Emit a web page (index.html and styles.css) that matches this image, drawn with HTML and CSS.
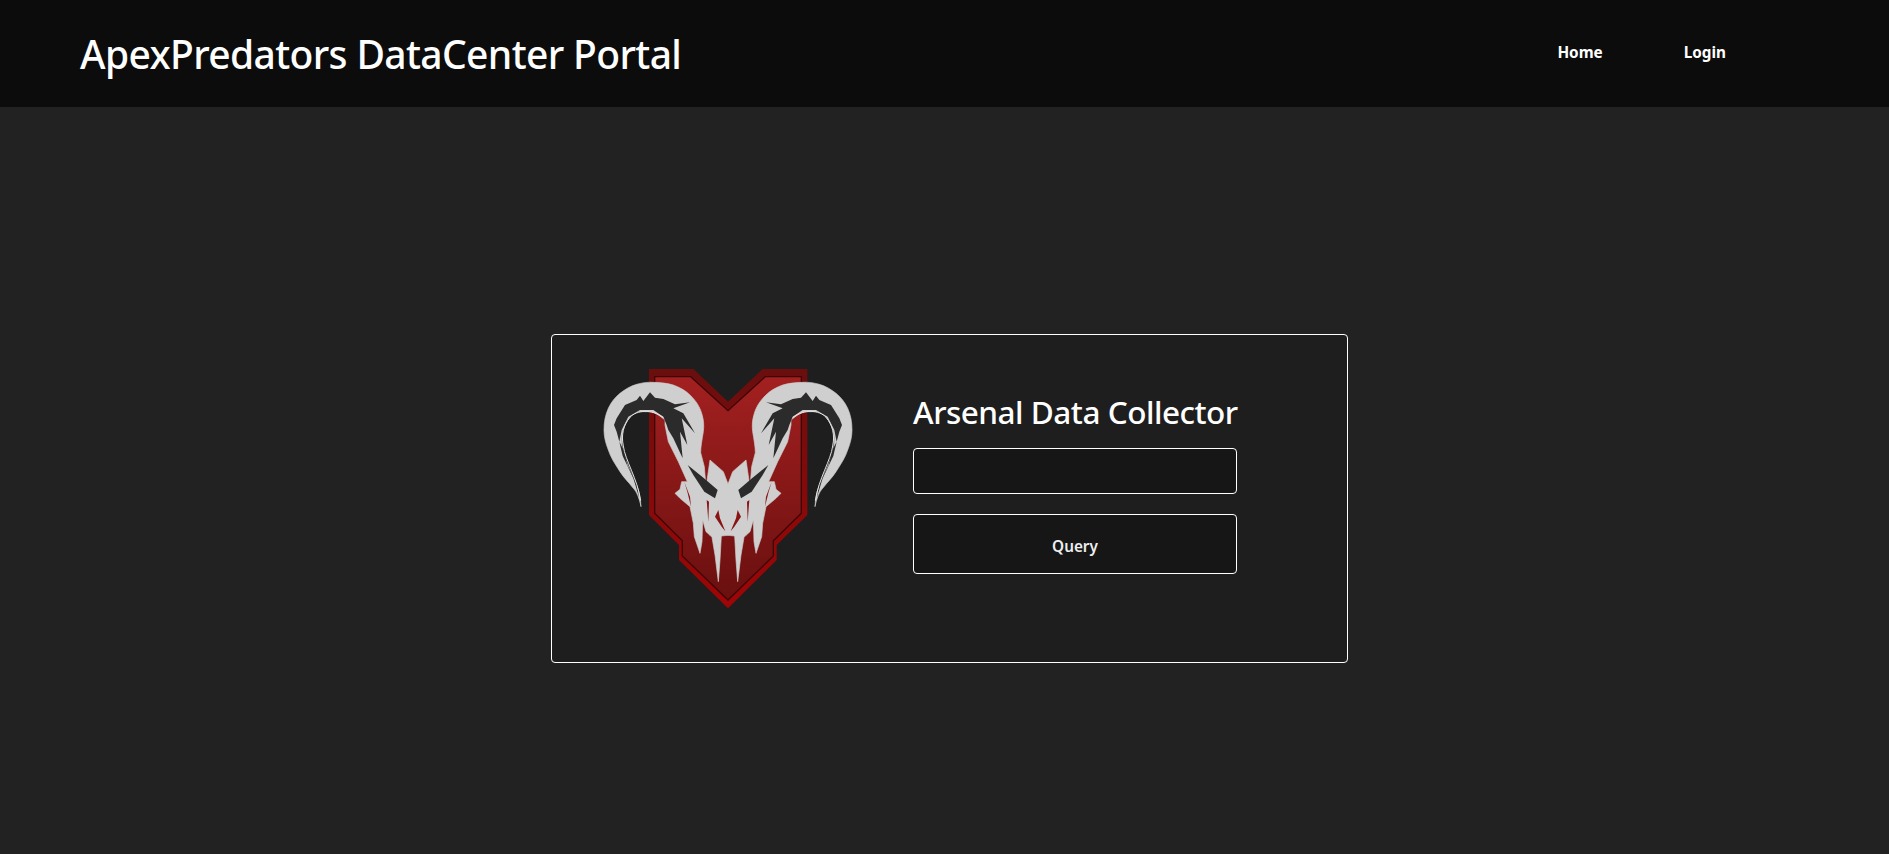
FILE: index.html
```html
<!DOCTYPE html>
<html lang="en">
<head>
<meta charset="utf-8">
<title>ApexPredators DataCenter Portal</title>
<link rel="stylesheet" href="styles.css">
</head>
<body>
<header class="topbar">
  <h1 class="brand">ApexPredators DataCenter Portal</h1>
  <nav class="nav">
    <a class="nav-link" href="#">Home</a>
    <a class="nav-link" href="#">Login</a>
  </nav>
</header>
<main class="page">
  <section class="card">
    <svg class="logo" viewBox="0 0 900 810" width="300" height="270" role="img" aria-label="Apex Predators logo">
      <defs>
        <linearGradient id="rim" x1="0" y1="0" x2="0" y2="1">
          <stop offset="0" stop-color="#6a0e0e"/>
          <stop offset="1" stop-color="#a00506"/>
        </linearGradient>
        <linearGradient id="fill" x1="0" y1="0" x2="0" y2="1">
          <stop offset="0" stop-color="#a32020"/>
          <stop offset="1" stop-color="#6a0f0f"/>
        </linearGradient>
        <g id="half">
          <path class="bone" d="M183 470 C178 445 170 425 160 415 C145 395 130 382 120 365 C104 340 92 322 85 300 C76 278 72 258 72 240 C72 215 76 195 85 175 C94 156 105 142 120 130 C135 118 152 108 170 103 C188 98 205 96 220 97 C245 98 262 100 280 105 C300 113 318 122 330 135 C348 152 360 172 365 190 C372 212 372 228 370 245 C366 270 362 290 362 308 L373 350 L378 412 L390 330 L430 365 L444 402 L444 556 L424 558 L420 630 L415 695 L405 615 L396 562 L390 556 L378 545 L368 510 L366 575 L360 610 L343 560 L340 520 L330 470 L300 445 L285 430 L300 418 L305 395 L322 395 L295 335 L265 275 L255 225 L255 210 C240 198 225 186 210 185 L175 185 C155 192 145 205 140 215 C130 232 125 250 125 265 C125 290 128 310 135 325 C145 350 158 380 170 405 C178 425 182 450 183 470 Z"/>
          <path class="dark" d="M110 245 L102 225 L110 205 L135 165 L170 150 L180 137 L190 153 L210 127 L225 143 L250 147 L285 163 L330 157 L280 175 L310 190 L345 250 L305 205 L322 285 L300 245 L308 325 L280 265 L265 240 L260 225 L250 200 L220 180 L180 180 L145 200 L125 240 L118 275 Z"/>
          <path class="dark" d="M118 275 L128 318 L160 385 L178 445 L170 400 L142 345 L131 300 Z"/>
          <path class="line" d="M130 288 C123 255 130 225 150 202 C170 180 215 176 250 203"/>
          <path class="line" d="M130 288 C135 330 172 385 182 452"/>
          <path class="dark" d="M323 345 L372 385 L413 420 L405 445 L373 425 L340 375 Z"/>
          <path class="slit" d="M415 480 L405 500 L425 530 L436 544 L420 505 Z"/>
          <path class="slit" d="M380 450 L385 515 L387 455 Z"/>
          <path class="slit" d="M313 395 L322 425 L333 470 L330 440 Z"/>
        </g>
      </defs>
      <path fill="url(#rim)" d="M207 57 L340 57 L444 155 L548 57 L682 57 L682 495 L590 585 L590 630 L444 775 L297 630 L297 585 L207 495 Z"/>
      <path fill="url(#fill)" stroke="#3c0707" stroke-width="4" d="M224 80 L332 80 L444 182 L556 80 L664 80 L664 490 L580 572 L580 618 L444 750 L307 618 L307 572 L224 490 Z"/>
      <use href="#half"/>
      <use href="#half" transform="translate(888 0) scale(-1 1)"/>
    </svg>
    <form class="panel">
      <h2 class="panel-title">Arsenal Data Collector</h2>
      <input class="field" type="text" aria-label="Query text">
      <button class="action" type="button">Query</button>
    </form>
  </section>
</main>
</body>
</html>
```
FILE: styles.css
```css
* { box-sizing: border-box; }
html, body { height: 100%; }
body {
  margin: 0;
  background: #222222;
  color: #fff;
  font-family: "Noto Sans", "Open Sans", sans-serif;
  overflow: hidden;
}
.topbar {
  height: 107px;
  background: #0c0c0c;
  display: flex;
  align-items: center;
  padding: 0 0 0 80px;
}
.brand {
  margin: 0;
  font-size: 39px;
  font-weight: 500;
  letter-spacing: -0.63px;
  line-height: 52px;
}
.nav {
  margin-left: auto;
  margin-right: 163px;
  display: flex;
  gap: 81px;
  position: relative;
  top: -2px;
}
.nav-link {
  color: #fff;
  font-size: 15.3px;
  font-weight: 700;
  text-decoration: none;
}
.page {
  display: flex;
  justify-content: center;
  padding: 227px 0 0 10px;
}
.card {
  width: 797px;
  height: 329px;
  background: #1e1e1e;
  border: 1px solid #fff;
  border-radius: 4px;
  padding: 15px 0 0 28px;
  display: flex;
  align-items: flex-start;
  gap: 33px;
}
.logo { display: block; flex: none; }
.logo .bone { fill: #cfcfcf; stroke: #cfcfcf; stroke-width: 2; stroke-linejoin: round; }
.logo .dark { fill: #2b2b2b; }
.logo .line { fill: none; stroke: #e4e4e4; stroke-width: 3; }
.logo .slit { fill: #8a1414; }
.panel {
  width: 324px;
  margin: 0;
  padding-top: 41px;
  display: flex;
  flex-direction: column;
  gap: 20px;
}
.panel-title {
  margin: 0 0 -5px;
  font-size: 31.5px;
  font-weight: 500;
  letter-spacing: -0.5px;
  line-height: 42px;
  white-space: nowrap;
}
.field, .action {
  display: block;
  width: 324px;
  background: #161616;
  border: 1px solid #fff;
  border-radius: 4px;
  color: #eee;
  font-family: inherit;
}
.field { height: 46px; }
.action {
  height: 60px;
  padding-top: 4px;
  font-size: 15.3px;
  font-weight: 600;
}
```
